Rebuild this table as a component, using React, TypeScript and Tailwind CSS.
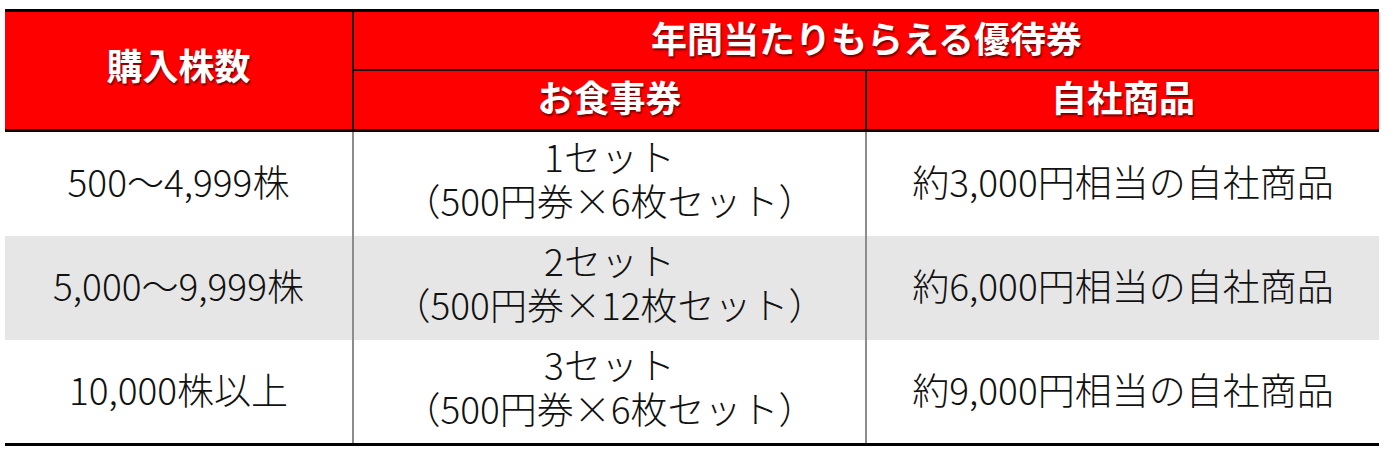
const rows = [
  { shares: '500～4,999株', sets: '1セット', detail: '（500円券×6枚セット）', goods: '約3,000円相当の自社商品', h: 'h-[104px]', bg: 'bg-white' },
  { shares: '5,000～9,999株', sets: '2セット', detail: '（500円券×12枚セット）', goods: '約6,000円相当の自社商品', h: 'h-[104px]', bg: 'bg-[#e6e6e6]' },
  { shares: '10,000株以上', sets: '3セット', detail: '（500円券×6枚セット）', goods: '約9,000円相当の自社商品', h: 'h-[103px]', bg: 'bg-white' },
];

const headText = 'text-white font-bold text-[36px] leading-none [text-shadow:1px_2px_2px_rgba(0,0,0,0.55)]';

export default function App() {
  return (
    <div className="w-[1394px] h-[461px] bg-white pt-[9px] pl-[5px] font-['Noto_Sans_CJK_JP','Noto_Sans',sans-serif]">
      <div className="w-[1374px] border-t-[3px] border-b-[3px] border-black">
        {/* header */}
        <div className="grid grid-cols-[352px_1022px] bg-[#ff0000] border-b-[3px] border-[#120000]">
          <div className="h-[117px] flex items-center justify-center pr-[5px] pb-[14px]">
            <span className={headText}>購入株数</span>
          </div>
          <div className="border-l-2 border-[#1a0000] -ml-[5px] w-[1027px]">
            <div className="h-[59px] flex items-center justify-center border-b-2 border-[#1a0000] pb-[8px]">
              <span className={headText}>年間当たりもらえる優待券</span>
            </div>
            <div className="grid grid-cols-[511px_514px] h-[58px]">
              <div className="flex items-center justify-center pb-[8px]">
                <span className={headText}>お食事券</span>
              </div>
              <div className="flex items-center justify-center border-l-2 border-[#1a0000] pb-[8px]">
                <span className={headText}>自社商品</span>
              </div>
            </div>
          </div>
        </div>
        {/* body */}
        {rows.map((r) => (
          <div key={r.shares} className={`grid grid-cols-[347px_513px_514px] ${r.h} ${r.bg} text-[37px] font-light text-[#111] leading-[44px]`}>
            <div className="flex items-center justify-center pb-[6px]">{r.shares}</div>
            <div className="flex flex-col items-center justify-center border-l-2 border-[#8c8c8c] pb-[12px]">
              <div>{r.sets}</div>
              <div>{r.detail}</div>
            </div>
            <div className="flex items-center justify-center border-l-2 border-[#8c8c8c] pb-[6px]">{r.goods}</div>
          </div>
        ))}
      </div>
    </div>
  );
}
